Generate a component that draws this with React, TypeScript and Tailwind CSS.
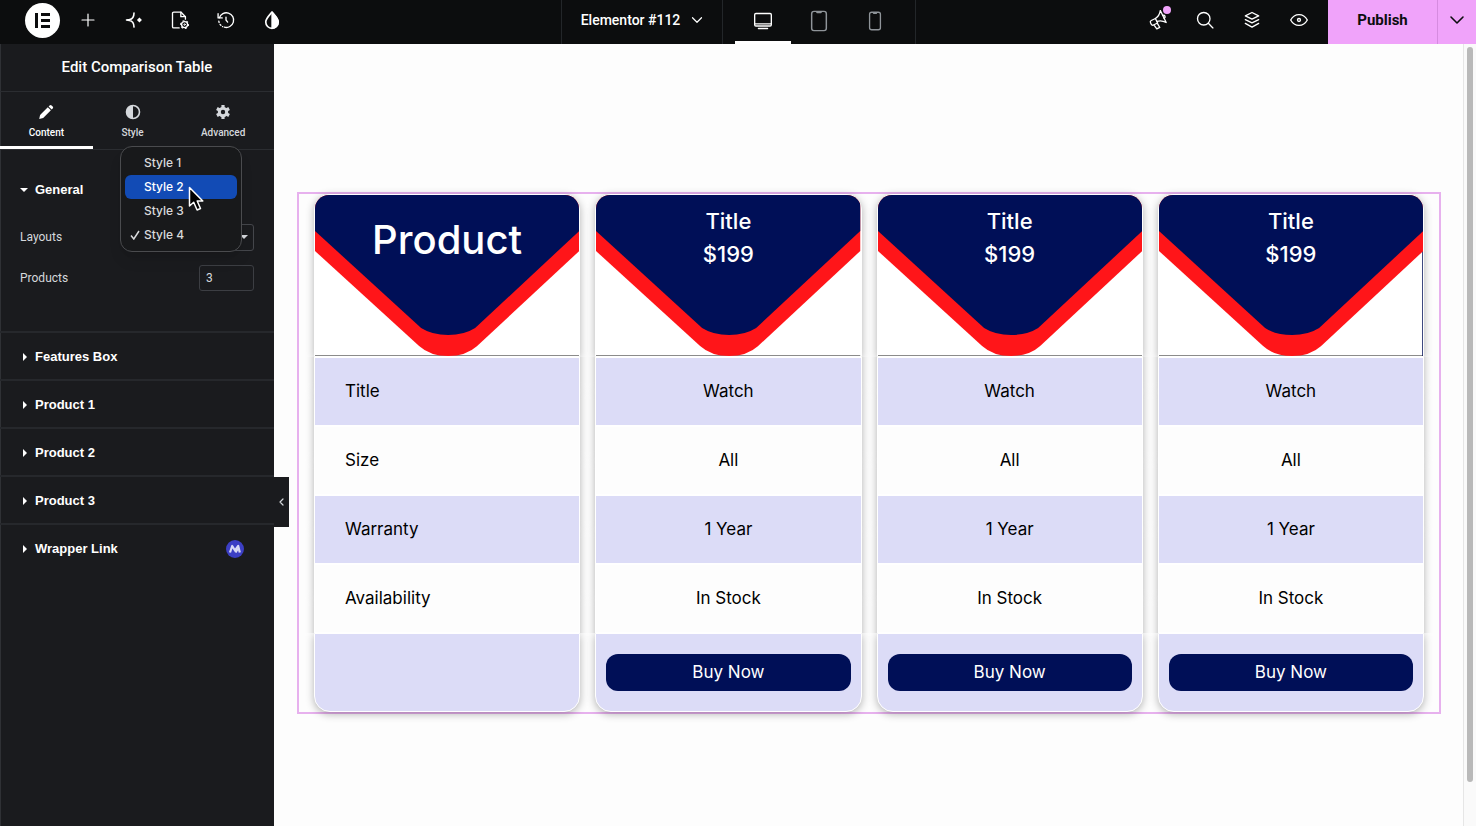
import { useState } from "react";
import type { ReactNode } from "react";

const sections = ["Features Box", "Product 1", "Product 2", "Product 3"];

const layouts = ["Style 1", "Style 2", "Style 3", "Style 4"];

const products = [
  { title: "Title", price: "$199" },
  { title: "Title", price: "$199" },
  { title: "Title", price: "$199" },
];

const features = [
  { name: "Title", value: "Watch" },
  { name: "Size", value: "All" },
  { name: "Warranty", value: "1 Year" },
  { name: "Availability", value: "In Stock" },
];

function Icon({ children, size = 18 }: { children: ReactNode; size?: number }) {
  return (
    <svg
      width={size}
      height={size}
      viewBox="0 0 24 24"
      fill="none"
      stroke="currentColor"
      strokeWidth="1.6"
      strokeLinecap="round"
      strokeLinejoin="round"
      aria-hidden="true"
    >
      {children}
    </svg>
  );
}

function BarButton({ label, children }: { label: string; children: ReactNode }) {
  return (
    <button
      type="button"
      aria-label={label}
      className="relative flex h-10 w-[46px] items-center justify-center text-white"
    >
      {children}
    </button>
  );
}

function TopBar() {
  return (
    <header className="grid h-11 grid-cols-[1fr_auto_1fr] bg-[#0c0d0e] text-white">
      <div className="flex items-start pl-[19px]">
        <BarButton label="Elementor menu">
          <span className="flex size-[35px] shrink-0 items-center justify-center rounded-full bg-white">
            <svg width="15" height="15" viewBox="0 0 15 15" fill="#0c0d0e" aria-hidden="true">
              <path d="M0 0h3v15H0zM6 0h9v3H6zM6 6h9v3H6zM6 12h9v3H6z" />
            </svg>
          </span>
        </BarButton>
        <BarButton label="Add element">
          <Icon>
            <path d="M12 4v16M4 12h16" />
          </Icon>
        </BarButton>
        <BarButton label="AI">
          <Icon size={20}>
            <path d="M12 3.500C12 8 9.500 11 6.500 11.500L3 12l3.500.500C9.500 13 12 16 12 20.500" strokeWidth="1.900" />
            <path d="M18.500 9 21.500 12 18.500 15 15.500 12z" fill="currentColor" stroke="none" />
          </Icon>
        </BarButton>
        <BarButton label="Page settings">
          <Icon size={20}>
            <path d="M11 21.500H4.500a1.500 1.500 0 0 1-1.500-1.500V4a1.500 1.500 0 0 1 1.500-1.500H13l5.500 5.500v3" />
            <path d="M13 2.500V8h5.500" />
            <circle cx="17.500" cy="17.500" r="3.600" />
            <circle cx="17.500" cy="17.500" r="4.700" strokeDasharray="1.200 3.700" strokeWidth="1.400" />
            <circle cx="17.500" cy="17.500" r="0.900" strokeWidth="1.200" />
          </Icon>
        </BarButton>
        <BarButton label="History">
          <Icon size={20}>
            <path d="M4 9.500A8.800 8.800 0 1 1 10 20.600" />
            <path d="M3.400 13.500A9 9 0 0 0 8 20" strokeDasharray="1.500 2.500" />
            <path d="M2.500 4.500v5h5M12 8.500V12l2 2.500" />
          </Icon>
        </BarButton>
        <BarButton label="Site settings">
          <Icon size={20}>
            <path
              d="M12 2.500C9 6.500 4.500 10 4.500 14.500a7.500 7.500 0 0 0 15 0C19.500 10 15 6.500 12 2.500z"
              strokeWidth="2"
            />
            <path d="M12 2.500c3 4 7.500 7.500 7.500 12A7.500 7.500 0 0 1 12 22z" fill="currentColor" />
          </Icon>
        </BarButton>
      </div>

      <div className="flex border-x border-[#232629]">
        <button
          type="button"
          className="flex h-10 w-40 items-center justify-center gap-2 pl-1 font-[Roboto,sans-serif] text-sm font-medium"
        >
          Elementor #112
          <Icon>
            <path d="m6 9 6 6 6-6" />
          </Icon>
        </button>
        <div className="flex border-l border-[#232629] px-3">
          <button
            type="button"
            aria-label="Desktop"
            className="flex w-14 items-center justify-center border-b-3 border-white"
          >
            <Icon size={20}>
              <rect x="2" y="3" width="20" height="15" rx="1.500" />
              <path d="M2.500 15.500h19M6.500 21h11" />
            </Icon>
          </button>
          <button
            type="button"
            aria-label="Tablet"
            className="flex w-14 items-center justify-center border-b-3 border-transparent text-[#8f9499]"
          >
            <Icon size={22}>
              <rect x="4" y="1.500" width="16" height="21" rx="2.500" />
              <path d="M10 2.500h4" strokeWidth="2.200" />
            </Icon>
          </button>
          <button
            type="button"
            aria-label="Mobile"
            className="flex w-14 items-center justify-center border-b-3 border-transparent text-[#8f9499]"
          >
            <Icon size={20}>
              <rect x="5.500" y="1.500" width="13" height="21" rx="2.500" />
              <path d="M10.500 2.500h3" strokeWidth="2.200" />
            </Icon>
          </button>
        </div>
      </div>

      <div className="flex items-start justify-end">
        <div className="mr-1.5 flex gap-px">
          <BarButton label="What's new">
            <Icon size={20}>
              <g transform="rotate(-26 12 12)">
                <path d="M10 9c4-.500 7-2.500 9.500-6v16c-2.500-3.500-5.500-5.500-9.500-6" />
                <path d="M10 9H4.500a2 2 0 0 0-2 2v2a2 2 0 0 0 2 2H10zM5 15l1 6h4l-.500-6M19.500 9.500a2 2 0 0 1 0 4" />
              </g>
            </Icon>
            <span className="absolute top-1.5 right-2.5 size-2 rounded-full bg-[#f0a3fa]" />
          </BarButton>
          <BarButton label="Finder">
            <Icon size={20}>
              <circle cx="10.500" cy="10.500" r="7.500" />
              <path d="m16 16 5.500 5.500" />
            </Icon>
          </BarButton>
          <BarButton label="Structure">
            <Icon size={20}>
              <path d="m12 3 8 4-8 4-8-4zM4 11.500l8 4 8-4M4 16l8 4.500 8-4.500" />
            </Icon>
          </BarButton>
          <BarButton label="Preview">
            <Icon size={20}>
              <path d="M2 12C4.500 7.500 8 5.500 12 5.500s7.500 2 10 6.500c-2.500 4.500-6 6.500-10 6.500S4.500 16.500 2 12z" />
              <circle cx="12" cy="12" r="1.800" />
            </Icon>
          </BarButton>
        </div>
        <div className="flex h-11 bg-[#f0a3fa] text-[#0c0d0e]">
          <button
            type="button"
            className="h-10 w-[109px] font-[Roboto,sans-serif] text-[15px] font-bold"
          >
            Publish
          </button>
          <button
            type="button"
            aria-label="Save options"
            className="flex w-[39px] items-center justify-center border-l border-[#d68be0] pb-1"
          >
            <Icon size={24}>
              <path d="m6 9 6 6 6-6" />
            </Icon>
          </button>
        </div>
      </div>
    </header>
  );
}

function Caret({ open = false }: { open?: boolean }) {
  return (
    <svg width="8" height="8" viewBox="0 0 8 8" fill="currentColor" aria-hidden="true">
      {open ? <path d="M0 2h8L4 6z" /> : <path d="M3 0l4 4-4 4z" />}
    </svg>
  );
}

function PanelTabs() {
  const tab =
    "flex flex-auto flex-col items-center gap-[5px] border-b-3 pt-3 text-[10px] leading-4 font-medium";
  return (
    <nav className="flex h-[58px] border-t border-[#2b2d31]">
      <button type="button" className={`${tab} border-white text-white`}>
        <svg width="16" height="16" viewBox="0 0 16 16" fill="currentColor" aria-hidden="true">
          <path d="M9.800 3.200 12.900 6.300 5.200 14 1.200 14.900 2.100 10.900z" />
          <path d="m10.600 2.400 1-1a1.400 1.400 0 0 1 2 0l1.100 1.100a1.400 1.400 0 0 1 0 2l-1 1z" />
        </svg>
        Content
      </button>
      <button type="button" className={`${tab} border-transparent text-[#d5d8dc]`}>
        <svg width="16" height="16" viewBox="0 0 16 16" aria-hidden="true">
          <circle cx="8" cy="8" r="6.500" fill="none" stroke="currentColor" strokeWidth="1.600" />
          <path d="M8 1.500a6.500 6.500 0 0 0 0 13z" fill="currentColor" />
        </svg>
        Style
      </button>
      <button type="button" className={`${tab} border-transparent text-[#d5d8dc]`}>
        <svg width="16" height="16" viewBox="0 0 16 16" fill="none" stroke="currentColor" aria-hidden="true">
          <circle cx="8" cy="8" r="3.700" strokeWidth="3" />
          <path
            d="M8 1v3M8 12v3M1.900 4.500l2.600 1.500M11.500 10l2.600 1.500M1.900 11.500 4.500 10M11.500 6l2.600-1.500"
            strokeWidth="3.200"
          />
        </svg>
        Advanced
      </button>
    </nav>
  );
}

function LayoutMenu({ value, onPick }: { value: string; onPick: (layout: string) => void }) {
  return (
    <div
      role="listbox"
      aria-label="Layouts"
      className="absolute top-[102px] left-[120px] z-10 w-[122px] rounded-xl border border-[#4a4b4e] bg-[#18191b] p-1 shadow-lg"
    >
      {layouts.map((layout, i) => (
        <button
          key={layout}
          type="button"
          role="option"
          aria-selected={layout === value}
          onClick={() => onPick(layout)}
          className={`flex h-6 w-full items-center rounded-md font-[Inter,sans-serif] text-xs font-medium ${
            i === 1 ? "bg-[#124bb5] text-white" : "text-[#d9dadc]"
          }`}
        >
          <span className="flex w-[19px] justify-center">
            {layout === value && (
              <svg
                width="10"
                height="10"
                viewBox="0 0 10 10"
                fill="none"
                stroke="currentColor"
                strokeWidth="1.500"
                aria-hidden="true"
              >
                <path d="m1 5.500 2.800 3.500L9 1" />
              </svg>
            )}
          </span>
          {layout}
        </button>
      ))}
      <svg className="absolute top-[39px] left-[67px]" width="16" height="26" viewBox="0 0 16 26" aria-hidden="true">
        <path
          d="M1.500 1.500v18.500l4.200-3.800 3.400 7.800 3.400-1.500-3.300-7.500h5.600z"
          fill="#000"
          stroke="#fff"
          strokeWidth="1.500"
          strokeLinejoin="round"
        />
      </svg>
    </div>
  );
}

function Panel() {
  const [layout, setLayout] = useState("Style 4");
  const toggle =
    "flex h-12 w-full items-center gap-[7px] border-t-2 border-[#26282c] px-5 pt-px font-['Liberation_Sans',sans-serif] text-[13px] font-bold";

  return (
    <aside className="relative w-[274px] shrink-0 bg-[#1a1b1e] font-[Roboto,sans-serif] text-white shadow-[inset_1px_0_#2f3135]">
      <h1 className="flex h-[47px] items-center justify-center text-[15px] font-medium">
        Edit Comparison Table
      </h1>
      <PanelTabs />

      <section className="h-[182px] border-t border-[#2b2d31] px-5 pt-[30px] text-xs text-[#d5d8dc]">
        <button
          type="button"
          className="flex h-5 items-center gap-[7px] font-['Liberation_Sans',sans-serif] text-[13px] font-bold text-white"
        >
          <Caret open />
          General
        </button>
        <div className="mt-[23px] flex h-7 items-center justify-between">
          <label htmlFor="layouts">Layouts</label>
          <span className="relative flex items-center">
            <select
              id="layouts"
              value={layout}
              onChange={(e) => setLayout(e.target.value)}
              className="h-[27px] w-[120px] appearance-none rounded-[3px] border border-[#44464b] bg-transparent pl-2"
            >
              {layouts.map((name) => (
                <option key={name}>{name}</option>
              ))}
            </select>
            <span className="pointer-events-none absolute right-1.5">
              <Caret open />
            </span>
          </span>
        </div>
        <div className="mt-[13px] flex h-7 items-center justify-between">
          <label htmlFor="products">Products</label>
          <input
            id="products"
            type="text"
            inputMode="numeric"
            defaultValue="3"
            className="h-[26px] w-[55px] rounded-[3px] border border-[#3c3e43] bg-transparent px-1.5"
          />
        </div>
      </section>

      {sections.map((name) => (
        <button key={name} type="button" className={toggle}>
          <Caret />
          {name}
        </button>
      ))}
      <button type="button" className={toggle}>
        <Caret />
        Wrapper Link
        <svg className="mr-2.5 ml-auto" width="18" height="18" viewBox="0 0 18 18" aria-hidden="true">
          <circle cx="9" cy="9" r="9" fill="#3c3fc4" />
          <path
            d="M4 12.500 6.200 6 9 10.500 12.200 6l1.600 6.500M9.500 12.500l2.200-3.500"
            fill="none"
            stroke="#d9daf5"
            strokeWidth="2.200"
            strokeLinejoin="round"
          />
        </svg>
      </button>

      <LayoutMenu value={layout} onPick={setLayout} />

      <button
        type="button"
        aria-label="Hide panel"
        className="absolute top-[433px] -right-[15px] flex h-[50px] w-[15px] items-center justify-center bg-[#1a1b1e] text-[#d5d8dc]"
      >
        <Icon size={12}>
          <path d="m14 6-6 6 6 6" strokeWidth="2.400" />
        </Icon>
      </button>
    </aside>
  );
}

function HeaderCell({ children, edge = false }: { children: ReactNode; edge?: boolean }) {
  return (
    <th
      scope="col"
      className="h-[163px] rounded-t-2xl border border-white bg-white p-0 shadow-[0_2px_8px_rgba(0,0,0,0.3),0_165px_8px_rgba(0,0,0,0.3)] [clip-path:inset(-15px_-15px_0)]"
    >
      <div className="relative h-[161px] overflow-hidden rounded-t-[14px]">
        <svg className="h-full w-full" viewBox="0 0 264 161" preserveAspectRatio="none" aria-hidden="true">
          <path d="M0 160h264v1H0z" fill="#8b8b8b" />
          {edge && <path d="M263 36h1v125h-1z" fill="#000f57" />}
          <path d="M0 0H264V56L162 151Q151 161 133 161Q115 161 104 151L0 56z" fill="#ff1519" />
          <path d="M0 0H264V36L160 133Q149 140 133 140Q117 140 106 133L0 36z" fill="#000f57" />
        </svg>
        <div className="absolute inset-x-0 top-0 text-white">{children}</div>
      </div>
    </th>
  );
}

function ComparisonTable() {
  // Each cell carries half-shifted shadows so that a column's shadow runs on unbroken
  const cell =
    "h-[69px] border border-white p-0 shadow-[0_34px_8px_rgba(0,0,0,0.3),0_-35px_8px_rgba(0,0,0,0.3)] [clip-path:inset(0_-15px)]";
  const lastCell =
    "h-[79px] rounded-b-2xl border border-white bg-[#dcdcf7] px-2.5 py-0 shadow-[0_2px_8px_rgba(0,0,0,0.3),0_-77px_8px_rgba(0,0,0,0.3)] [clip-path:inset(0_-15px_-15px)]";

  return (
    <div className="border-2 border-[#e7b1ee]">
      <table className="w-full table-fixed border-separate border-spacing-x-[15px] border-spacing-y-0 font-[Inter,sans-serif] text-[17px] text-black">
        <thead>
          <tr>
            <HeaderCell>
              <p className="pt-5 text-[40px] leading-[50px] font-medium">Product</p>
            </HeaderCell>
            {products.map((product, i) => (
              <HeaderCell key={i} edge={i === products.length - 1}>
                <p className="pt-2.5 text-[22px] leading-[33px] font-medium">{product.title}</p>
                <p className="text-[22px] leading-[33px] font-medium">{product.price}</p>
              </HeaderCell>
            ))}
          </tr>
        </thead>
        <tbody>
          {features.map((feature, row) => {
            const fill = row % 2 === 0 ? "bg-[#dcdcf7]" : "bg-[#fdfdfd]";
            return (
              <tr key={feature.name}>
                <th scope="row" className={`${cell} ${fill} text-left font-normal`}>
                  <span className="pl-[30px]">{feature.name}</span>
                </th>
                {products.map((_, i) => (
                  <td key={i} className={`${cell} ${fill} text-center`}>
                    {feature.value}
                  </td>
                ))}
              </tr>
            );
          })}
          <tr>
            <td className={lastCell} />
            {products.map((_, i) => (
              <td key={i} className={lastCell}>
                <a
                  href="#"
                  className="flex h-[37px] items-center justify-center rounded-xl bg-[#000f57] text-white"
                >
                  Buy Now
                </a>
              </td>
            ))}
          </tr>
        </tbody>
      </table>
    </div>
  );
}

export default function App() {
  return (
    <div className="flex min-h-screen flex-col bg-[#fdfdfd]">
      <TopBar />
      <div className="flex flex-1">
        <Panel />
        <main className="flex-1 pt-[148px] pr-[22px] pl-[23px]">
          <ComparisonTable />
        </main>
        <div className="flex w-[13px] flex-col border-l border-[#e6e6e6] bg-[#fafafa] px-[3px] pt-[3px] pb-11">
          <div className="flex-1 rounded-full bg-[#b9b9b9]" />
        </div>
      </div>
    </div>
  );
}
